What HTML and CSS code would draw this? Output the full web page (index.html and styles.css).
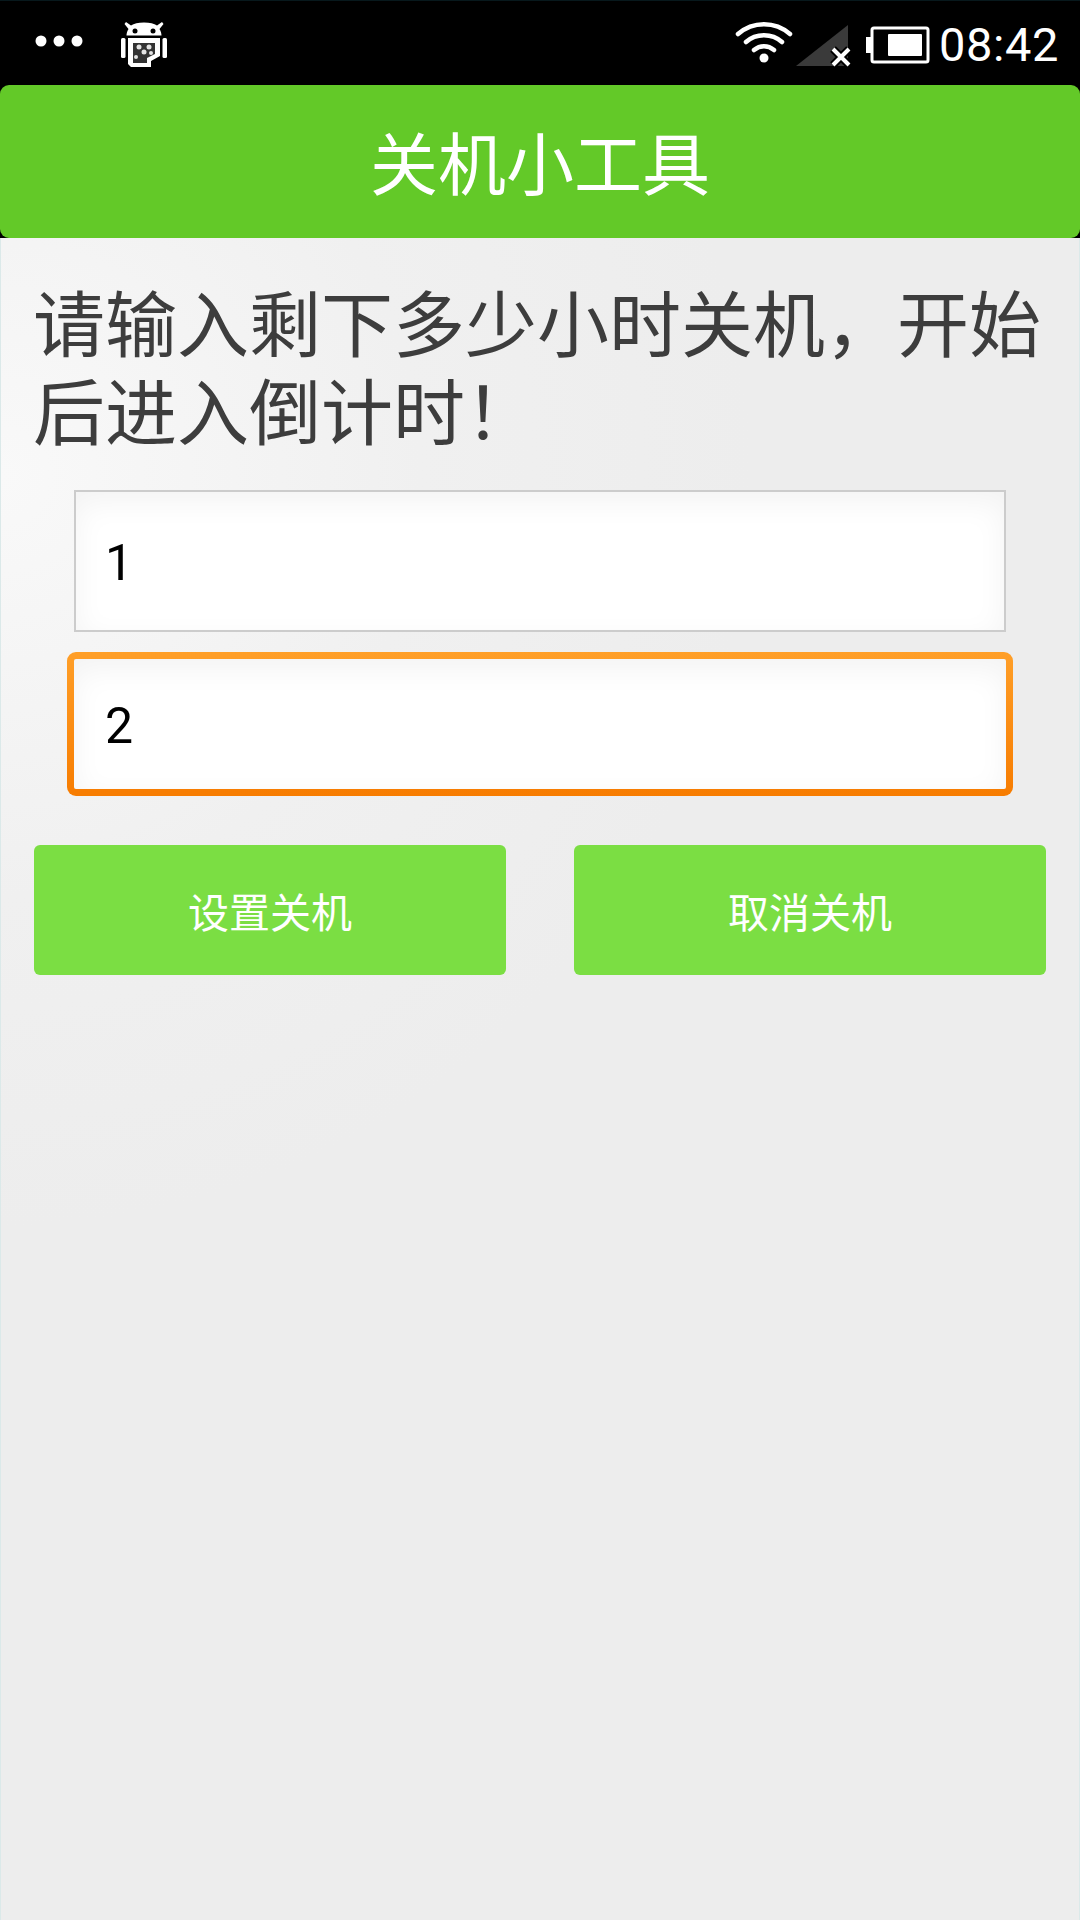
FILE: index.html
```html
<!DOCTYPE html>
<html lang="zh">
<head>
<meta charset="utf-8">
<title>关机小工具</title>
<link rel="stylesheet" href="styles.css">
</head>
<body>
<div class="screen">
  <div class="status">
    <div class="status-left">
      <svg class="dots" width="48" height="12" viewBox="0 0 48 12"><circle cx="6" cy="6" r="5.5"/><circle cx="24" cy="6" r="5.5"/><circle cx="42" cy="6" r="5.5"/></svg>
      <svg class="robot" width="46" height="46" viewBox="0 0 46 46">
        <path fill="#fff" d="M5 0l5 3.500C13 1.500 17 .5 23 .5s10 1 13 3L41 0l1.500 2-4 5c1.500 2 2 5 2 6.500H5.500C5.500 12 6 9 7.500 7l-4-5z"/>
        <circle cx="14" cy="9" r="2.500" fill="#000"/><circle cx="32" cy="9" r="2.500" fill="#000"/>
        <rect x="0" y="16" width="4.500" height="20" rx="1.500" fill="#fff"/><rect x="41.500" y="16" width="4.500" height="20" rx="1.500" fill="#fff"/>
        <path fill="#fff" d="M7 16h32v18l-9 5v6H10l-3-3z"/>
        <path fill="#333" d="M12 21h22v11l-8 4v5H12z"/>
        <g fill="#e4e4e4"><circle cx="18" cy="25" r="2.500"/><circle cx="28" cy="25" r="2.500"/><circle cx="23" cy="30" r="2.500"/><circle cx="15" cy="35" r="2"/><circle cx="30" cy="31" r="2"/></g>
      </svg>
    </div>
    <div class="status-right">
      <svg class="wifi" width="58" height="44" viewBox="0 0 58 44">
        <g fill="none" stroke="#fff" stroke-width="4.500" stroke-linecap="round"><path d="M3 14C18 1 40 1 55 14"/><path d="M11 22C21 13 37 13 47 22"/><path d="M19 30C25 25 33 25 39 30"/></g>
        <circle cx="29" cy="38" r="4.500" fill="#fff"/>
      </svg>
      <svg class="signal" width="56" height="42" viewBox="0 0 56 42">
        <path fill="#3a3a3a" d="M0 41L52 0v41z"/>
        <path stroke="#000" stroke-width="8" d="M37 24l16 16M53 24L37 40"/>
        <path stroke="#fff" stroke-width="4" d="M37 24l16 16M53 24L37 40"/>
      </svg>
      <svg class="battery" width="64" height="38" viewBox="0 0 64 38">
        <path fill="#fff" d="M0 11h5v16H0z"/>
        <rect x="6" y="2" width="56" height="34" rx="2" fill="none" stroke="#fff" stroke-width="3"/>
        <rect x="22" y="8" width="34" height="22" rx="1" fill="#fff"/>
      </svg>
      <span class="clock">08:42</span>
    </div>
  </div>
  <header class="appbar">关机小工具</header>
  <main class="content">
    <p class="prompt">请输入剩下多少小时关机，开始后进入倒计时！</p>
    <div class="fields">
      <div class="field">1</div>
      <div class="field field-focused">2</div>
    </div>
    <div class="actions">
      <button class="action">设置关机</button>
      <button class="action">取消关机</button>
    </div>
  </main>
</div>
</body>
</html>
```
FILE: styles.css
```css
* { box-sizing: border-box; }
html, body { margin: 0; padding: 0; }
body { width: 1080px; height: 1920px; overflow: hidden; background: #000; font-family: "Noto Sans CJK SC", Roboto, sans-serif; }
.screen { width: 1080px; height: 1920px; display: flex; flex-direction: column; }

.status { height: 85px; flex: none; background: #000; border-top: 1px solid #07181c; display: flex; align-items: center; justify-content: space-between; padding: 0 21px 0 35px; }
.status-left { display: flex; align-items: center; gap: 38px; }
.dots { fill: #fff; margin-bottom: 4px; }
.robot { margin-top: 4px; }
.status-right { display: flex; align-items: center; }
.wifi { margin: 0 3px 2px 0; }
.signal { margin: 6px 14px 0 0; }
.battery { margin: 4px 9px 0 0; }
.clock { font-family: Roboto, sans-serif; font-size: 47px; color: #fff; font-weight: 400; letter-spacing: .6px; margin-top: 3px; }

.appbar { height: 153px; flex: none; background: #63c928; border-radius: 9px; color: #fff; font-size: 68px; font-weight: 400; display: flex; align-items: center; justify-content: center; padding-bottom: 3px; }

.content { flex: 1; min-height: 0; padding: 0 34px; background: radial-gradient(circle at 0 238px, #f9f9f9 0, #f0f0f0 420px, #ededed 750px); background-color: #ededed; border-left: 1px solid #dbe9e9; border-right: 1px solid #dbe9e9; }
.prompt { margin: 38px -6px 0 -2px; color: #3d3d3d; font-size: 72px; font-weight: 400; line-height: 88px; }
.fields { display: flex; flex-direction: column; align-items: center; margin-top: 38px; }
.field { font-family: Roboto, sans-serif; color: #000; font-size: 50px; display: flex; align-items: center; background: #fff; box-shadow: inset 0 10px 30px rgba(0,0,0,.05); padding-top: 4px; }
.field:not(.field-focused) { width: 932px; height: 142px; border: 2px solid #cccccc; padding-left: 29px; }
.field-focused { width: 946px; height: 144px; margin-top: 20px; border: 7px solid transparent; background: linear-gradient(#fff, #fff) padding-box, linear-gradient(#ff9f28, #f77c00) border-box; border-radius: 9px; padding-left: 31px; }
.actions { display: flex; justify-content: space-between; margin: 49px -1px 0 -1px; }
.action { width: 472px; height: 130px; border: 0; border-radius: 6px; background: #7bde43; color: #fff; font-family: "Noto Sans CJK SC", sans-serif; font-size: 41px; padding: 0; }
```
